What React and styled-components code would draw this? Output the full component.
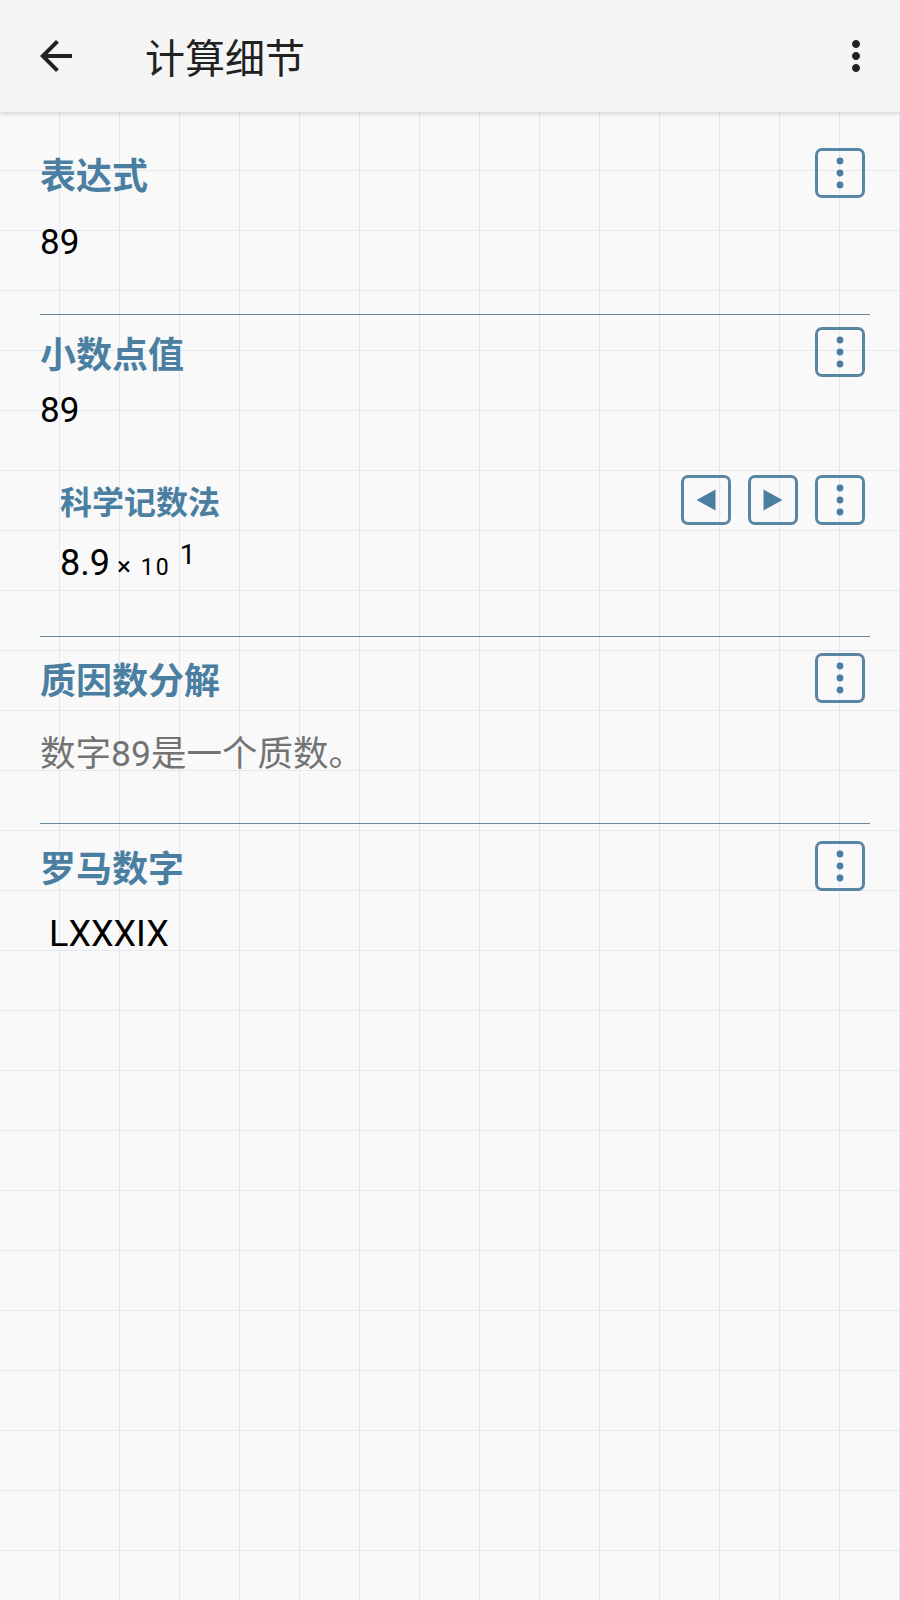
import React from "react";
import styled, { createGlobalStyle } from "styled-components";

const GlobalStyle = createGlobalStyle`
  html, body {
    margin: 0;
    padding: 0;
  }
  body {
    min-height: 1600px;
    background-color: #f9f9fa;
    background-image:
      linear-gradient(to right, #e5e8f1 1px, transparent 1px),
      linear-gradient(to bottom, #e5e8f1 1px, transparent 1px);
    background-size: 60px 60px;
    background-position: -1px 50px;
    font-family: Roboto, "Noto Sans CJK SC", "Noto Sans", sans-serif;
  }
`;

const Header = styled.header`
  position: relative;
  z-index: 1;
  height: 112px;
  display: flex;
  align-items: center;
  background: #f5f5f5;
  box-shadow: 0 2px 4px rgba(0, 0, 0, 0.14);
`;

const IconButton = styled.button`
  width: 48px;
  height: 48px;
  padding: 0;
  border: none;
  background: transparent;
  display: flex;
  align-items: center;
  justify-content: center;
  color: #212121;
  margin-left: ${(p) => p.$ml || "0"};
  margin-right: ${(p) => p.$mr || "0"};
`;

const Title = styled.h1`
  margin: 0 0 0 65px;
  font-family: "Noto Sans CJK SC", sans-serif;
  font-weight: 400;
  font-size: 40px;
  color: #212121;
  flex: 1;
`;

const Main = styled.main`
  padding: 0 30px 0 40px;
`;

const Section = styled.section`
  padding-top: ${(p) => p.$pt}px;
  padding-bottom: ${(p) => p.$pb || 0}px;
  border-bottom: ${(p) => (p.$last ? "none" : "1px solid #62879f")};
`;

const SubBlock = styled.div`
  margin-top: ${(p) => p.$mt}px;
  padding-left: 20px;
`;

const HeadRow = styled.div`
  display: flex;
  align-items: center;
  height: 50px;
`;

const Heading = styled.h2`
  margin: 0;
  font-family: "Noto Sans CJK SC", sans-serif;
  font-weight: 700;
  font-size: ${(p) => (p.$sub ? 32 : 36)}px;
  color: #4b7fa1;
  line-height: 50px;
`;

const Actions = styled.div`
  margin-left: auto;
  margin-right: 5px;
  display: flex;
  gap: 17px;
`;

const BoxButton = styled.button`
  width: 50px;
  height: 50px;
  box-sizing: border-box;
  border: 3px solid #5a86a5;
  border-radius: 7px;
  background: transparent;
  padding: 0;
  display: flex;
  align-items: center;
  justify-content: center;
  color: #4b7ea0;
`;

const Value = styled.div`
  margin-top: ${(p) => p.$mt}px;
  padding-left: ${(p) => p.$indent || 0}px;
  font-size: ${(p) => p.$size || 35}px;
  line-height: 48px;
  color: ${(p) => (p.$muted ? "#737373" : "#000000")};
  white-space: nowrap;
`;

const Mantissa = styled.span`
  font-size: 36px;
`;

const Times = styled.span`
  font-size: 26px;
  line-height: 1;
  margin-left: 7px;
`;

const Base = styled.span`
  font-size: 23px;
  line-height: 1;
  letter-spacing: 2px;
  margin-left: 10px;
`;

const Exp = styled.span`
  font-size: 28px;
  line-height: 1;
  margin-left: 9px;
  vertical-align: 11px;
`;

const DotsIcon = () => (
  <svg width="10" height="32" viewBox="0 0 10 32" fill="currentColor">
    <circle cx="5" cy="4" r="3.4" />
    <circle cx="5" cy="16" r="3.4" />
    <circle cx="5" cy="28" r="3.4" />
  </svg>
);

const TriLeft = () => (
  <svg width="20" height="22" viewBox="0 0 20 22" fill="currentColor">
    <polygon points="19.5,0.5 19.5,21.5 0.5,11" />
  </svg>
);

const TriRight = () => (
  <svg width="20" height="22" viewBox="0 0 20 22" fill="currentColor">
    <polygon points="0.5,0.5 0.5,21.5 19.5,11" />
  </svg>
);

const MenuButton = () => (
  <BoxButton aria-label="更多">
    <DotsIcon />
  </BoxButton>
);

const BackIcon = () => (
  <svg width="48" height="48" viewBox="0 0 24 24" fill="currentColor">
    <path d="M20 11H7.83l5.59-5.59L12 4l-8 8 8 8 1.41-1.41L7.83 13H20v-2z" />
  </svg>
);

const MoreVertIcon = () => (
  <svg width="48" height="48" viewBox="0 0 24 24" fill="currentColor">
    <path d="M12 8c1.1 0 2-.9 2-2s-.9-2-2-2-2 .9-2 2 .9 2 2 2zm0 2c-1.1 0-2 .9-2 2s.9 2 2 2 2-.9 2-2-.9-2-2-2zm0 6c-1.1 0-2 .9-2 2s.9 2 2 2 2-.9 2-2-.9-2-2-2z" />
  </svg>
);

export default function App() {
  return (
    <>
      <GlobalStyle />
      <Header>
        <IconButton $ml="32px" aria-label="返回">
          <BackIcon />
        </IconButton>
        <Title>计算细节</Title>
        <IconButton $mr="20px" aria-label="更多选项">
          <MoreVertIcon />
        </IconButton>
      </Header>
      <Main>
        <Section $pt={36} $pb={47}>
          <HeadRow>
            <Heading>表达式</Heading>
            <Actions>
              <MenuButton />
            </Actions>
          </HeadRow>
          <Value $mt={21}>89</Value>
        </Section>

        <Section $pt={12} $pb={48}>
          <HeadRow>
            <Heading>小数点值</Heading>
            <Actions>
              <MenuButton />
            </Actions>
          </HeadRow>
          <Value $mt={10}>89</Value>
          <SubBlock $mt={40}>
            <HeadRow>
              <Heading $sub>科学记数法</Heading>
              <Actions>
                <BoxButton aria-label="上一个">
                  <TriLeft />
                </BoxButton>
                <BoxButton aria-label="下一个">
                  <TriRight />
                </BoxButton>
                <MenuButton />
              </Actions>
            </HeadRow>
            <Value $mt={14}>
              <Mantissa>8.9</Mantissa>
              <Times>×</Times>
              <Base>10</Base>
              <Exp>1</Exp>
            </Value>
          </SubBlock>
        </Section>

        <Section $pt={16} $pb={45}>
          <HeadRow>
            <Heading>质因数分解</Heading>
            <Actions>
              <MenuButton />
            </Actions>
          </HeadRow>
          <Value $mt={27} $size={35.5} $muted>
            数字89是一个质数。
          </Value>
        </Section>

        <Section $pt={17} $last>
          <HeadRow>
            <Heading>罗马数字</Heading>
            <Actions>
              <MenuButton />
            </Actions>
          </HeadRow>
          <Value $mt={19} $size={36} $indent={9}>
            LXXXIX
          </Value>
        </Section>
      </Main>
    </>
  );
}
